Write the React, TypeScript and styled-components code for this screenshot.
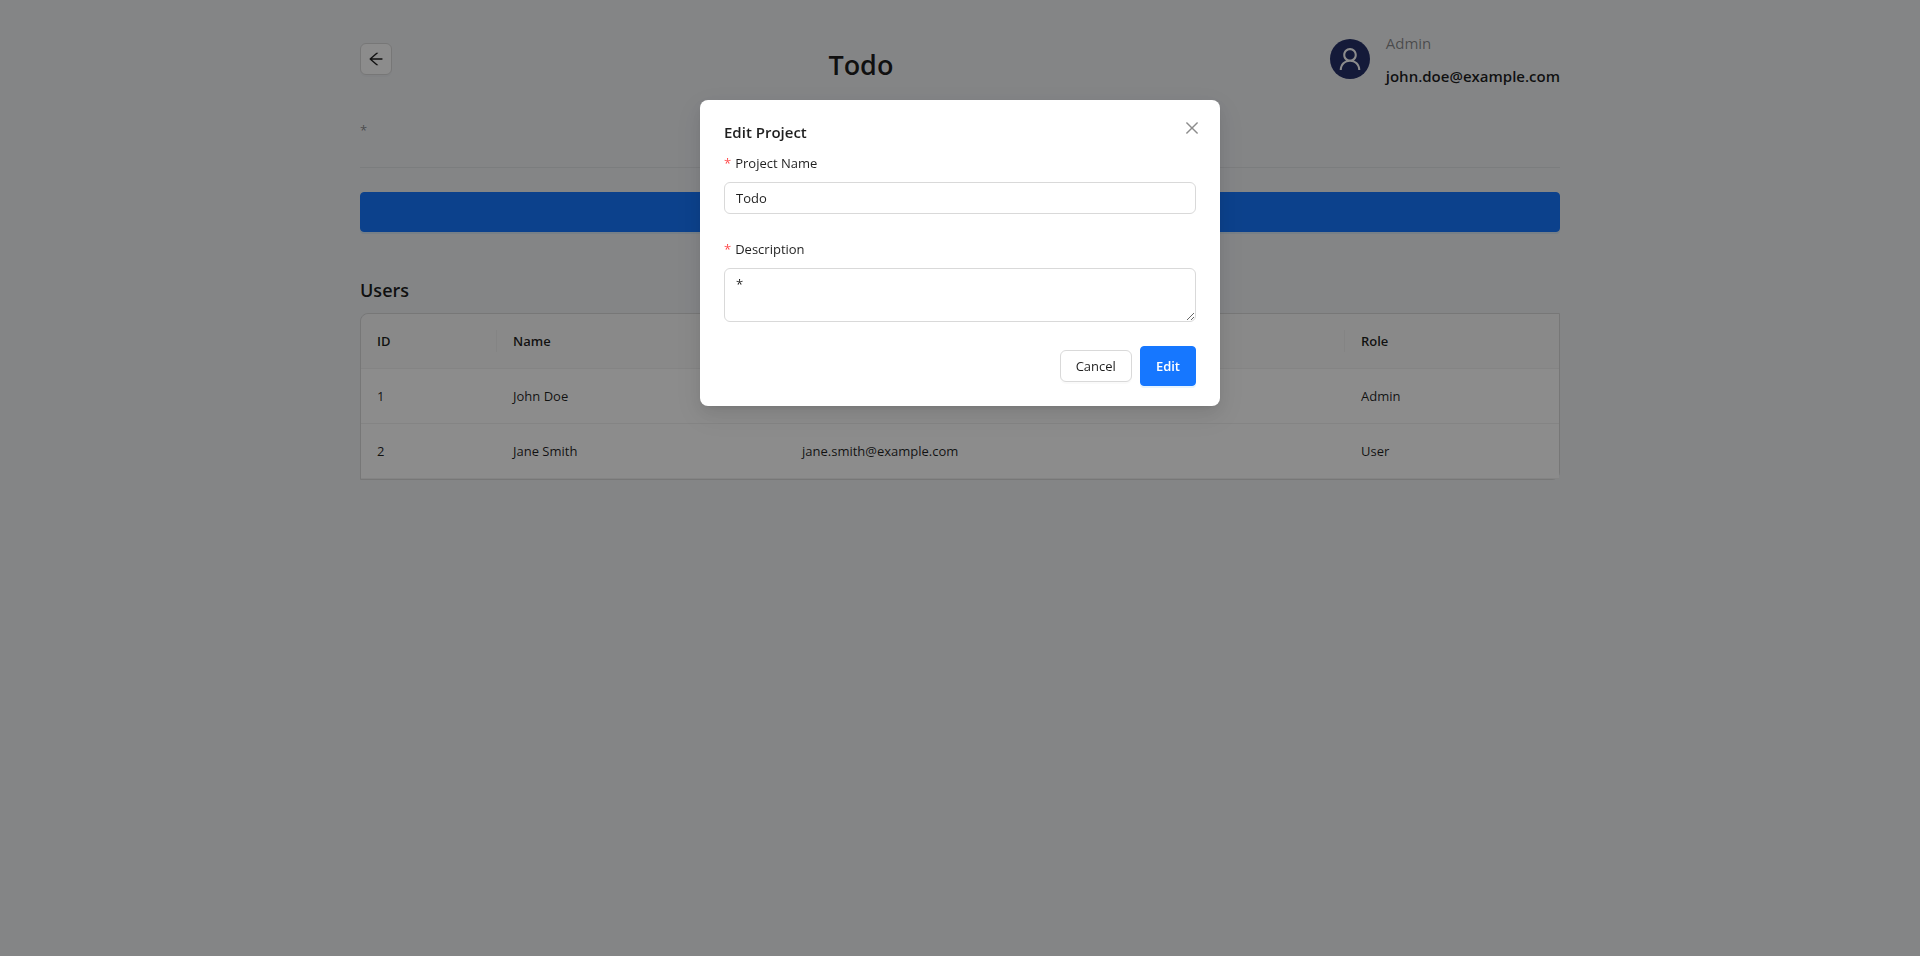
import React from "react";
import styled, { createGlobalStyle } from "styled-components";
import { AiOutlineArrowLeft, AiOutlineClose, AiOutlineUser } from "react-icons/ai";

const GlobalStyle = createGlobalStyle`
  *, *::before, *::after { box-sizing: border-box; }
  body {
    margin: 0;
    background: #f0f2f5;
    color: rgba(0, 0, 0, 0.88);
    font: 400 13px/22px "Segoe UI", "Open Sans", "Noto Sans", sans-serif;
  }
  button, input, textarea { font: inherit; color: inherit; }
  h1, h2, p { margin: 0; font-weight: 600; }
`;

const Page = styled.main`
  min-height: 100vh;
  padding: 24px;
`;

const Container = styled.div`
  max-width: 1200px;
  margin: 0 auto;
`;

const Header = styled.header`
  display: flex;
  align-items: center;
  justify-content: space-between;
  height: 70px;
`;

const Button = styled.button<{ $primary?: boolean; $block?: boolean }>`
  display: ${(p) => (p.$block ? "block" : "inline-block")};
  width: ${(p) => (p.$block ? "100%" : "auto")};
  height: ${(p) => (p.$primary ? 40 : 32)}px;
  padding: 0 15px;
  border: 1px solid ${(p) => (p.$primary ? "#1677ff" : "#d9d9d9")};
  border-radius: ${(p) => (p.$primary ? 4 : 6)}px;
  background: ${(p) => (p.$primary ? "#1677ff" : "#fff")};
  color: ${(p) => (p.$primary ? "#fff" : "inherit")};
  font-weight: ${(p) => (p.$primary ? 600 : 400)};
  box-shadow: 0 2px 0 ${(p) => (p.$primary ? "rgba(5, 145, 255, 0.1)" : "rgba(0, 0, 0, 0.02)")};
  cursor: pointer;
`;

const IconButton = styled(Button)`
  display: flex;
  align-items: center;
  justify-content: center;
  width: 32px;
  padding: 0;
`;

const Title = styled.h1`
  padding-top: 12px;
  font-size: 27px;
  line-height: 38px;
`;

const UserInfo = styled.div`
  display: flex;
  align-items: center;
  gap: 16px;
`;

const Avatar = styled.span`
  display: flex;
  align-items: center;
  justify-content: center;
  width: 40px;
  height: 40px;
  border-radius: 50%;
  background: #253068;
  color: #fff;
`;

const UserText = styled.div`
  display: flex;
  flex-direction: column;
  gap: 8px;
  padding-top: 1px;
  font-size: 15px;
  line-height: 25px;
`;

const UserRole = styled.span`
  color: rgba(0, 0, 0, 0.45);
`;

const UserEmail = styled.span`
  font-weight: 600;
`;

const Description = styled.p`
  padding: 25px 0 26px;
  color: rgba(0, 0, 0, 0.45);
  font-weight: 400;
`;

const Divider = styled.hr`
  height: 1px;
  margin: 0 0 24px;
  border: 0;
  background: rgba(5, 5, 5, 0.06);
`;

const SectionTitle = styled.h2`
  margin: 44px 0 9px;
  font-size: 18px;
  line-height: 28px;
`;

const TableFrame = styled.div`
  border: 1px solid #d9d9d9;
  border-radius: 8px 0 8px 0;
`;

const Table = styled.table`
  width: 100%;
  table-layout: fixed;
  border-collapse: separate;
  border-spacing: 0;
  text-align: left;
`;

const Col = styled.col<{ $width?: number }>`
  width: ${(p) => (p.$width ? `${p.$width}px` : "auto")};
`;

const HeadCell = styled.th`
  position: relative;
  height: 55px;
  padding: 0 16px;
  border-bottom: 1px solid #f0f0f0;
  background: #fafafa;
  font-weight: 600;

  &:first-child {
    border-top-left-radius: 8px;
  }

  &:not(:last-child)::after {
    content: "";
    position: absolute;
    top: 16px;
    right: 0;
    width: 1px;
    height: 22px;
    background: #f0f0f0;
  }
`;

const Cell = styled.td`
  height: 55px;
  padding: 0 16px;
  border-bottom: 1px solid #f0f0f0;
  background: #fff;
`;

const Mask = styled.div`
  position: fixed;
  inset: 0;
  background: rgba(0, 0, 0, 0.45);
`;

const Dialog = styled.section`
  position: relative;
  width: 520px;
  max-width: calc(100% - 32px);
  margin: 100px auto 0;
  padding: 20px 24px;
  border-radius: 8px;
  background: #fff;
  box-shadow: 0 6px 16px 0 rgba(0, 0, 0, 0.08), 0 3px 6px -4px rgba(0, 0, 0, 0.12),
    0 9px 28px 8px rgba(0, 0, 0, 0.05);
`;

const DialogTitle = styled.h2`
  margin-bottom: 8px;
  font-size: 15px;
  line-height: 24px;
`;

const CloseButton = styled.button`
  position: absolute;
  top: 17px;
  right: 17px;
  display: flex;
  align-items: center;
  justify-content: center;
  width: 22px;
  height: 22px;
  padding: 0;
  border: 0;
  background: none;
  color: rgba(0, 0, 0, 0.45);
  cursor: pointer;
`;

const Form = styled.form`
  display: flex;
  flex-direction: column;
  gap: 24px;
`;

const Field = styled.div`
  display: flex;
  flex-direction: column;
  gap: 8px;
`;

const Label = styled.label`
  &::before {
    content: "*";
    margin-right: 4px;
    color: #ff4d4f;
  }
`;

const Input = styled.input`
  height: 32px;
  padding: 4px 11px;
  border: 1px solid #d9d9d9;
  border-radius: 6px;
  background: #fff;
`;

const TextArea = styled.textarea`
  height: 54px;
  padding: 4px 11px;
  border: 1px solid #d9d9d9;
  border-radius: 6px;
  background: #fff;
  resize: vertical;
`;

const Actions = styled.div`
  display: flex;
  align-items: center;
  justify-content: flex-end;
  gap: 8px;
`;

const users = [
  { id: 1, name: "John Doe", email: "john.doe@example.com", role: "Admin" },
  { id: 2, name: "Jane Smith", email: "jane.smith@example.com", role: "User" },
];

export default function App() {
  return (
    <>
      <GlobalStyle />
      <Page>
        <Container>
          <Header>
            <IconButton type="button" aria-label="Back">
              <AiOutlineArrowLeft size={18} />
            </IconButton>
            <Title>Todo</Title>
            <UserInfo>
              <Avatar>
                <AiOutlineUser size={28} />
              </Avatar>
              <UserText>
                <UserRole>Admin</UserRole>
                <UserEmail>john.doe@example.com</UserEmail>
              </UserText>
            </UserInfo>
          </Header>
          <Description>*</Description>
          <Divider />
          <Button type="button" $primary $block aria-label="Edit project" />
          <SectionTitle>Users</SectionTitle>
          <TableFrame>
            <Table>
              <colgroup>
                <Col $width={136} />
                <Col $width={289} />
                <Col />
                <Col $width={214} />
              </colgroup>
              <thead>
                <tr>
                  <HeadCell>ID</HeadCell>
                  <HeadCell>Name</HeadCell>
                  <HeadCell>Email</HeadCell>
                  <HeadCell>Role</HeadCell>
                </tr>
              </thead>
              <tbody>
                {users.map((user) => (
                  <tr key={user.id}>
                    <Cell>{user.id}</Cell>
                    <Cell>{user.name}</Cell>
                    <Cell>{user.email}</Cell>
                    <Cell>{user.role}</Cell>
                  </tr>
                ))}
              </tbody>
            </Table>
          </TableFrame>
        </Container>
      </Page>
      <Mask>
        <Dialog role="dialog" aria-modal="true" aria-labelledby="dialog-title">
          <DialogTitle id="dialog-title">Edit Project</DialogTitle>
          <CloseButton type="button" aria-label="Close">
            <AiOutlineClose size={18} />
          </CloseButton>
          <Form onSubmit={(e) => e.preventDefault()}>
            <Field>
              <Label htmlFor="project-name">Project Name</Label>
              <Input id="project-name" defaultValue="Todo" />
            </Field>
            <Field>
              <Label htmlFor="project-description">Description</Label>
              <TextArea id="project-description" defaultValue="*" />
            </Field>
            <Actions>
              <Button type="button">Cancel</Button>
              <Button type="submit" $primary>
                Edit
              </Button>
            </Actions>
          </Form>
        </Dialog>
      </Mask>
    </>
  );
}
